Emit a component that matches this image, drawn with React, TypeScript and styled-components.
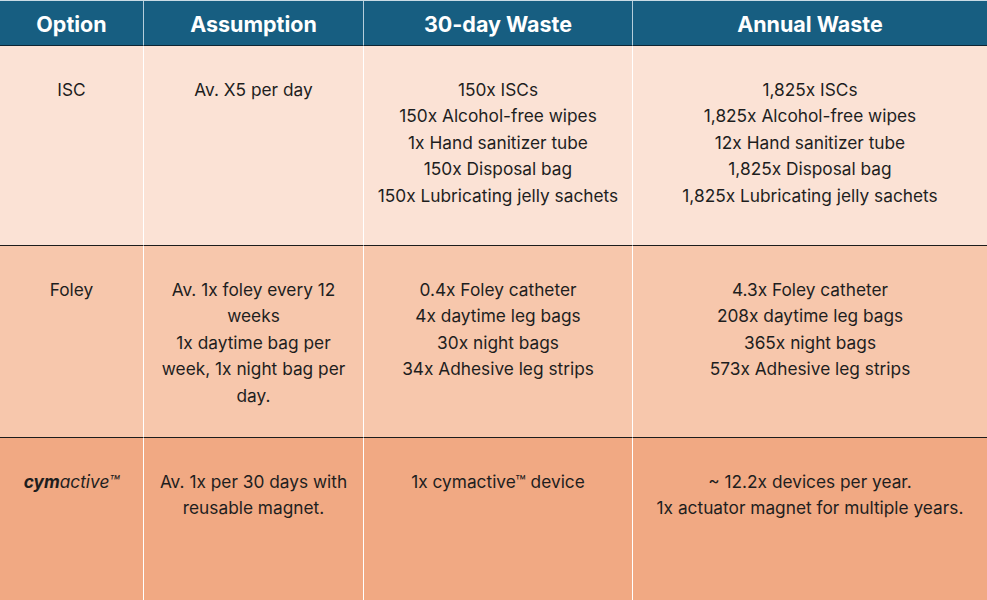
import React from 'react';
import styled, { createGlobalStyle } from 'styled-components';

const GlobalStyle = createGlobalStyle`
  html, body {
    margin: 0;
    padding: 0;
    background: #ffffff;
  }
  * {
    box-sizing: border-box;
  }
`;

const Table = styled.div`
  width: 987px;
  height: 600px;
  overflow: hidden;
  display: grid;
  grid-template-columns: 143px 220px 269px 1fr;
  grid-template-rows: 45px 199px 192px 1fr;
  border-top: 1px solid #c9dbe5;
  font-family: Inter, 'Open Sans', 'Liberation Sans', sans-serif;
  color: #1e1e1e;
`;

const HeadCell = styled.div<{ first?: boolean }>`
  background: #175e81;
  color: #ffffff;
  font-weight: 700;
  font-size: 21.5px;
  display: flex;
  align-items: center;
  justify-content: center;
  padding-top: 2px;
  border-left: ${p => (p.first ? 'none' : '1px solid #b5cedb')};
  border-bottom: 1px solid #0d2533;
`;

const rowColors = ['#fbe2d5', '#f7c7ac', '#f1a983'];

const Cell = styled.div<{ row: number; first?: boolean }>`
  background: ${p => rowColors[p.row]};
  border-left: ${p => (p.first ? 'none' : '1px solid #ffffff')};
  border-top: ${p => (p.row > 0 ? '1px solid #1c1c1c' : 'none')};
  padding: 31px 4px 0;
  text-align: center;
  font-size: 17.3px;
  line-height: 26.4px;
`;

const Line = styled.div``;

const Brand = styled.span`
  font-style: italic;
  b {
    font-weight: 700;
  }
`;

const rows: { option: React.ReactNode; assumption: string[]; month: string[]; year: string[] }[] = [
  {
    option: 'ISC',
    assumption: ['Av. X5 per day'],
    month: [
      '150x ISCs',
      '150x Alcohol-free wipes',
      '1x Hand sanitizer tube',
      '150x Disposal bag',
      '150x Lubricating jelly sachets',
    ],
    year: [
      '1,825x ISCs',
      '1,825x Alcohol-free wipes',
      '12x Hand sanitizer tube',
      '1,825x Disposal bag',
      '1,825x Lubricating jelly sachets',
    ],
  },
  {
    option: 'Foley',
    assumption: ['Av. 1x foley every 12', 'weeks', '1x daytime bag per', 'week, 1x night bag per', 'day.'],
    month: ['0.4x Foley catheter', '4x daytime leg bags', '30x night bags', '34x Adhesive leg strips'],
    year: ['4.3x Foley catheter', '208x daytime leg bags', '365x night bags', '573x Adhesive leg strips'],
  },
  {
    option: (
      <Brand>
        <b>cym</b>active™
      </Brand>
    ),
    assumption: ['Av. 1x per 30 days with', 'reusable magnet.'],
    month: ['1x cymactive™ device'],
    year: ['~ 12.2x devices per year.', '1x actuator magnet for multiple years.'],
  },
];

export default function App() {
  const headers = ['Option', 'Assumption', '30-day Waste', 'Annual Waste'];
  return (
    <>
      <GlobalStyle />
      <Table>
        {headers.map((h, i) => (
          <HeadCell key={h} first={i === 0}>
            {h}
          </HeadCell>
        ))}
        {rows.map((r, ri) => (
          <React.Fragment key={ri}>
            <Cell row={ri} first>
              {r.option}
            </Cell>
            <Cell row={ri}>
              {r.assumption.map(t => (
                <Line key={t}>{t}</Line>
              ))}
            </Cell>
            <Cell row={ri}>
              {r.month.map(t => (
                <Line key={t}>{t}</Line>
              ))}
            </Cell>
            <Cell row={ri}>
              {r.year.map(t => (
                <Line key={t}>{t}</Line>
              ))}
            </Cell>
          </React.Fragment>
        ))}
      </Table>
    </>
  );
}
